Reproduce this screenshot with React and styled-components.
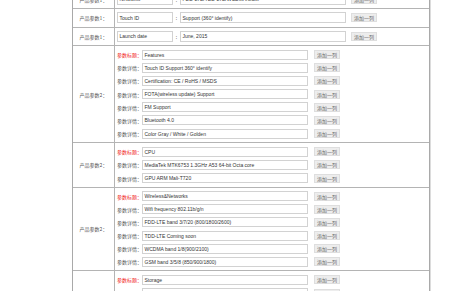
import React from "react";
import styled, { createGlobalStyle } from "styled-components";

const GlobalStyle = createGlobalStyle`
  html, body {
    margin: 0;
    padding: 0;
    background: #fff;
  }
  body {
    font-family: "Liberation Sans", "Noto Sans CJK SC", sans-serif;
    overflow: hidden;
  }
`;

const Table = styled.div`
  margin: -9.5px 0 0 72px;
  width: 358px;
  box-sizing: border-box;
  border-left: 1px solid #a9a9a9;
  border-right: 1px solid #a9a9a9;
  box-shadow: 1px 0 0 #dcdcdc;
`;

const Row = styled.div`
  display: flex;
  border-bottom: 1px solid #b4b4b4;
`;

const Label = styled.div`
  width: 42px;
  flex: none;
  box-sizing: border-box;
  border-right: 1px solid #b4b4b4;
  display: flex;
  align-items: center;
  justify-content: center;
  font-family: "Noto Sans CJK SC", sans-serif;
  font-size: 5px;
  color: #555;
`;

const Cell = styled.div`
  flex: 1;
  padding: ${(p) => (p.$group ? "3.5px 0 3.5px 2px" : "3.25px 0 3.25px 2px")};
  display: flex;
  flex-direction: column;
  gap: 3.2px;
`;

const Line = styled.div`
  display: flex;
  align-items: center;
  height: ${(p) => (p.$tall ? "11px" : "10px")};
`;

const Field = styled.div`
  box-sizing: border-box;
  width: ${(p) => p.$w}px;
  height: 100%;
  border: 1px solid #d2d2d2;
  background: #fff;
  font-size: 5px;
  color: #333;
  padding-left: 1.5px;
  display: flex;
  align-items: center;
  white-space: nowrap;
  overflow: hidden;
`;

const Colon = styled.span`
  width: 7px;
  text-align: center;
  font-family: "Noto Sans CJK SC", sans-serif;
  font-size: 5px;
  color: #555;
`;

const Tag = styled.span`
  width: 25px;
  flex: none;
  font-family: "Noto Sans CJK SC", sans-serif;
  font-size: 5px;
  color: ${(p) => (p.$title ? "#f01818" : "#555")};
  white-space: nowrap;
`;

const AddButton = styled.div`
  box-sizing: border-box;
  margin-left: ${(p) => p.$gap}px;
  width: 26px;
  height: 9px;
  background: #ededed;
  border: 1px solid #dedede;
  font-family: "Noto Sans CJK SC", sans-serif;
  font-size: 5px;
  color: #666;
  display: flex;
  align-items: center;
  justify-content: center;
`;

const simple = [
  ["Networks", "FDD-LTE/TDD-LTE/WCDMA/GSM"],
  ["Touch ID", "Support (360° identify)"],
  ["Launch date", "June, 2015"],
];

const groups = [
  [
    "Features",
    "Touch ID Support  360° identify",
    "Certification: CE / RoHS / MSDS",
    "FOTA(wireless update) Support",
    "FM Support",
    "Bluetooth 4.0",
    "Color Gray / White / Golden",
  ],
  ["CPU", "MediaTek MTK6753 1.3GHz A53 64-bit Octa core", "GPU ARM Mali-T720"],
  [
    "Wireless&Networks",
    "Wifi frequency 802.11b/g/n",
    "FDD-LTE band 3/7/20 (800/1800/2600)",
    "TDD-LTE Coming soon",
    "WCDMA band 1/8(900/2100)",
    "GSM band 3/5/8 (850/900/1800)",
  ],
  ["Storage", "ROM 16GB", "RAM 2GB", "Micro SD up to 128GB"],
];

export default function App() {
  return (
    <>
      <GlobalStyle />
      <Table>
        {simple.map(([name, value]) => (
          <Row key={name}>
            <Label>产品参数1：</Label>
            <Cell>
              <Line $tall>
                <Field $w={56}>{name}</Field>
                <Colon>:</Colon>
                <Field $w={166}>{value}</Field>
                <AddButton $gap={5}>添加一列</AddButton>
              </Line>
            </Cell>
          </Row>
        ))}
        {groups.map((items) => (
          <Row key={items[0]}>
            <Label>产品参数2：</Label>
            <Cell $group>
              {items.map((text, i) => (
                <Line key={text}>
                  <Tag $title={i === 0}>{i === 0 ? "参数标题：" : "参数详情："}</Tag>
                  <Field $w={166}>{text}</Field>
                  <AddButton $gap={6}>添加一列</AddButton>
                </Line>
              ))}
            </Cell>
          </Row>
        ))}
      </Table>
    </>
  );
}
